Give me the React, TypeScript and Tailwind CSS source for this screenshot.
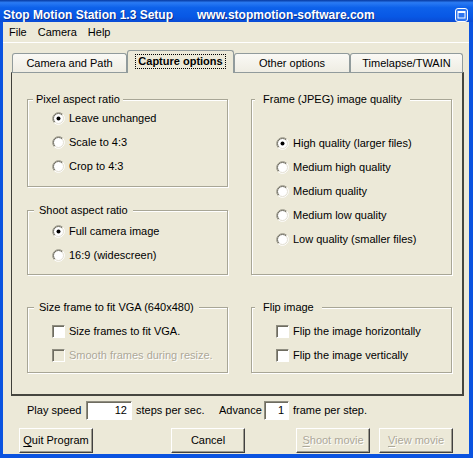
import React from 'react';

const BG = 'bg-[#ECE9D8]';

const Radio: React.FC<{ checked?: boolean }> = ({ checked }) => (
  <svg width="13" height="13" viewBox="0 0 13 13" className="flex-none">
    <circle cx="6.5" cy="6.5" r="5.6" fill="#fff" />
    <path d="M2.26 10.74 A6 6 0 0 1 10.74 2.26" fill="none" stroke="#9A988A" strokeWidth="1" />
    <path d="M2.96 10.04 A5 5 0 0 1 10.04 2.96" fill="none" stroke="#6E6C60" strokeWidth="1" />
    <path d="M10.74 2.26 A6 6 0 0 1 2.26 10.74" fill="none" stroke="#fff" strokeWidth="1" />
    <path d="M10.04 2.96 A5 5 0 0 1 2.96 10.04" fill="none" stroke="#E2DFD2" strokeWidth="1" />
    {checked && <circle cx="6.5" cy="6.5" r="2" fill="#000" />}
  </svg>
);

const Check: React.FC<{ disabled?: boolean }> = ({ disabled }) => (
  <div
    className={`flex-none w-[13px] h-[13px] border border-t-[#8F8D80] border-l-[#8F8D80] border-r-white border-b-white shadow-[inset_1px_1px_0_#6E6C60] ${
      disabled ? BG : 'bg-white'
    }`}
  />
);

type Opt = { label: string; kind: 'radio' | 'check'; checked?: boolean; disabled?: boolean };

const Row: React.FC<Opt> = ({ label, kind, checked, disabled }) => (
  <div className="h-[24px] flex items-center gap-[4px]">
    {kind === 'radio' ? <Radio checked={checked} /> : <Check disabled={disabled} />}
    <span className={disabled ? 'text-[#ACA899] [text-shadow:1px_1px_0_#fff]' : 'text-black'}>{label}</span>
  </div>
);

const Group: React.FC<{
  title: string;
  box: string;
  legend: string;
  options: Opt[];
}> = ({ title, box, legend, options }) => (
  <div
    className={`relative w-[201px] border border-[#A8A696] shadow-[1px_1px_0_#fff,inset_1px_1px_0_#fff] pl-[24px] ${box}`}
  >
    <span className={`absolute -top-[8px] leading-[14px] ${BG} ${legend}`}>{title}</span>
    {options.map((o) => (
      <Row key={o.label} {...o} />
    ))}
  </div>
);

const Tab: React.FC<{ label: string; w: string; selected?: boolean }> = ({ label, w, selected }) =>
  selected ? (
    <div
      className={`relative z-10 h-[23px] ${w} flex-none ${BG} border border-b-0 border-[#919B9C] rounded-t-[3px] flex items-center justify-center pb-[1px] font-bold`}
    >
      <span className="border border-dotted border-black px-[2px] leading-[13px]">{label}</span>
    </div>
  ) : (
    <div
      className={`h-[20px] ${w} flex-none bg-[linear-gradient(to_bottom,#FAF9F5,#EEECE2)] border border-b-0 border-[#919B9C] rounded-t-[3px] flex items-center justify-center`}
    >
      {label}
    </div>
  );

const Button: React.FC<{ children: React.ReactNode; ml: string; disabled?: boolean }> = ({
  children,
  ml,
  disabled,
}) => (
  <div
    className={`${ml} w-[74px] h-[25px] flex-none flex items-center justify-center border border-t-white border-l-white border-r-[#404040] border-b-[#404040] shadow-[inset_-1px_-1px_0_#9D9B8E] ${
      disabled ? 'text-[#ACA899] [text-shadow:1px_1px_0_#fff]' : 'text-black'
    }`}
  >
    {children}
  </div>
);

const Field: React.FC<{ value: string; w: string }> = ({ value, w }) => (
  <div
    className={`${w} h-[19px] flex-none bg-white border border-t-[#8F8D80] border-l-[#8F8D80] border-r-white border-b-white shadow-[inset_1px_1px_0_#6E6C60] flex items-center justify-end pr-[4px]`}
  >
    {value}
  </div>
);

export default function App() {
  return (
    <div className="w-[473px] h-[458px] overflow-hidden flex flex-col bg-[#0A53E0] font-['Liberation_Sans',Arial,sans-serif] text-[11px] text-black">
      {/* title bar */}
      <div className="h-[22px] flex-none flex items-start justify-between bg-[linear-gradient(to_bottom,#07399F,#2A7BF4_12%,#0D61EA_35%,#0858E5_75%,#0A4BD4)] pl-[3px] pr-[5px] pt-[8px] text-white font-bold text-[12px] leading-[14px] [text-shadow:1px_1px_0_#0A2F8C]">
        <div className="flex">
          <span className="w-[194px]">Stop Motion Station 1.3 Setup</span>
          <span>www.stopmotion-software.com</span>
        </div>
        <svg width="13" height="14" viewBox="0 0 13 14" className="flex-none">
          <rect x="0.5" y="0.5" width="12" height="13" rx="2.5" fill="#2D74F0" stroke="#fff" />
          <rect x="3" y="3.5" width="7" height="6.5" fill="none" stroke="#fff" />
          <rect x="3" y="3" width="7" height="2" fill="#fff" />
        </svg>
      </div>

      <div className={`flex-1 ml-[3px] mr-[4px] mb-[4px] ${BG} flex flex-col`}>
        {/* menu */}
        <div className="h-[21px] flex-none flex items-center gap-[11px] pl-[6px] border-b border-white">
          <span>File</span>
          <span>Camera</span>
          <span>Help</span>
        </div>

        {/* tabs */}
        <div className="mt-[7px] h-[23px] flex-none flex items-end pl-[9px]">
          <Tab label="Camera and Path" w="w-[115px]" />
          <Tab label="Capture options" w="w-[107px]" selected />
          <Tab label="Other options" w="w-[116px]" />
          <Tab label="Timelapse/TWAIN" w="w-[113px]" />
        </div>

        {/* panel */}
        <div className="-mt-px ml-[8px] w-[453px] h-[324px] flex-none border-t border-t-[#919B9C] border-l border-l-[#3F3F3A] border-r-2 border-r-[#46463F] border-b-2 border-b-[#46463F] flex gap-[23px] pl-[15px] pt-[26px]">
          <div className="flex flex-col">
            <Group
              title="Pixel aspect ratio"
              box="h-[88px] pt-[6px]"
              legend="left-[5px] px-[3px]"
              options={[
                { label: 'Leave unchanged', kind: 'radio', checked: true },
                { label: 'Scale to 4:3', kind: 'radio' },
                { label: 'Crop to 4:3', kind: 'radio' },
              ]}
            />
            <div className="mt-[23px]">
              <Group
                title="Shoot aspect ratio"
                box="h-[65px] pt-[8px]"
                legend="left-[6px] px-[5px]"
                options={[
                  { label: 'Full camera image', kind: 'radio', checked: true },
                  { label: '16:9 (widescreen)', kind: 'radio' },
                ]}
              />
            </div>
            <div className="mt-[32px]">
              <Group
                title="Size frame to fit VGA (640x480)"
                box="h-[66px] pt-[11px]"
                legend="left-[6px] px-[5px]"
                options={[
                  { label: 'Size frames to fit VGA.', kind: 'check' },
                  { label: 'Smooth frames during resize.', kind: 'check', disabled: true },
                ]}
              />
            </div>
          </div>
          <div className="flex flex-col">
            <Group
              title="Frame (JPEG) image quality"
              box="h-[176px] pt-[31px]"
              legend="left-[3px] px-[8px]"
              options={[
                { label: 'High quality (larger files)', kind: 'radio', checked: true },
                { label: 'Medium high quality', kind: 'radio' },
                { label: 'Medium quality', kind: 'radio' },
                { label: 'Medium low quality', kind: 'radio' },
                { label: 'Low quality (smaller files)', kind: 'radio' },
              ]}
            />
            <div className="mt-[32px]">
              <Group
                title="Flip image"
                box="h-[66px] pt-[11px]"
                legend="left-[3px] px-[8px]"
                options={[
                  { label: 'Flip the image horizontally', kind: 'check' },
                  { label: 'Flip the image vertically', kind: 'check' },
                ]}
              />
            </div>
          </div>
        </div>

        {/* speed row */}
        <div className="mt-[5px] h-[19px] flex-none flex items-center pl-[24px]">
          <span className="w-[59px] flex-none">Play speed</span>
          <Field value="12" w="w-[46px]" />
          <span className="ml-[4px] w-[83px] flex-none">steps per sec.</span>
          <span className="w-[45px] flex-none">Advance</span>
          <Field value="1" w="w-[25px]" />
          <span className="ml-[4px]">frame per step.</span>
        </div>

        {/* buttons */}
        <div className="mt-[8px] flex">
          <Button ml="ml-[16px]">
            <span>
              <u className="underline-offset-2">Q</u>uit Program
            </span>
          </Button>
          <Button ml="ml-[78px]">Cancel</Button>
          <Button ml="ml-[51px]" disabled>
            <span>
              <u className="underline-offset-2">S</u>hoot movie
            </span>
          </Button>
          <Button ml="ml-[9px]" disabled>
            <span>
              <u className="underline-offset-2">V</u>iew movie
            </span>
          </Button>
        </div>
      </div>
    </div>
  );
}
